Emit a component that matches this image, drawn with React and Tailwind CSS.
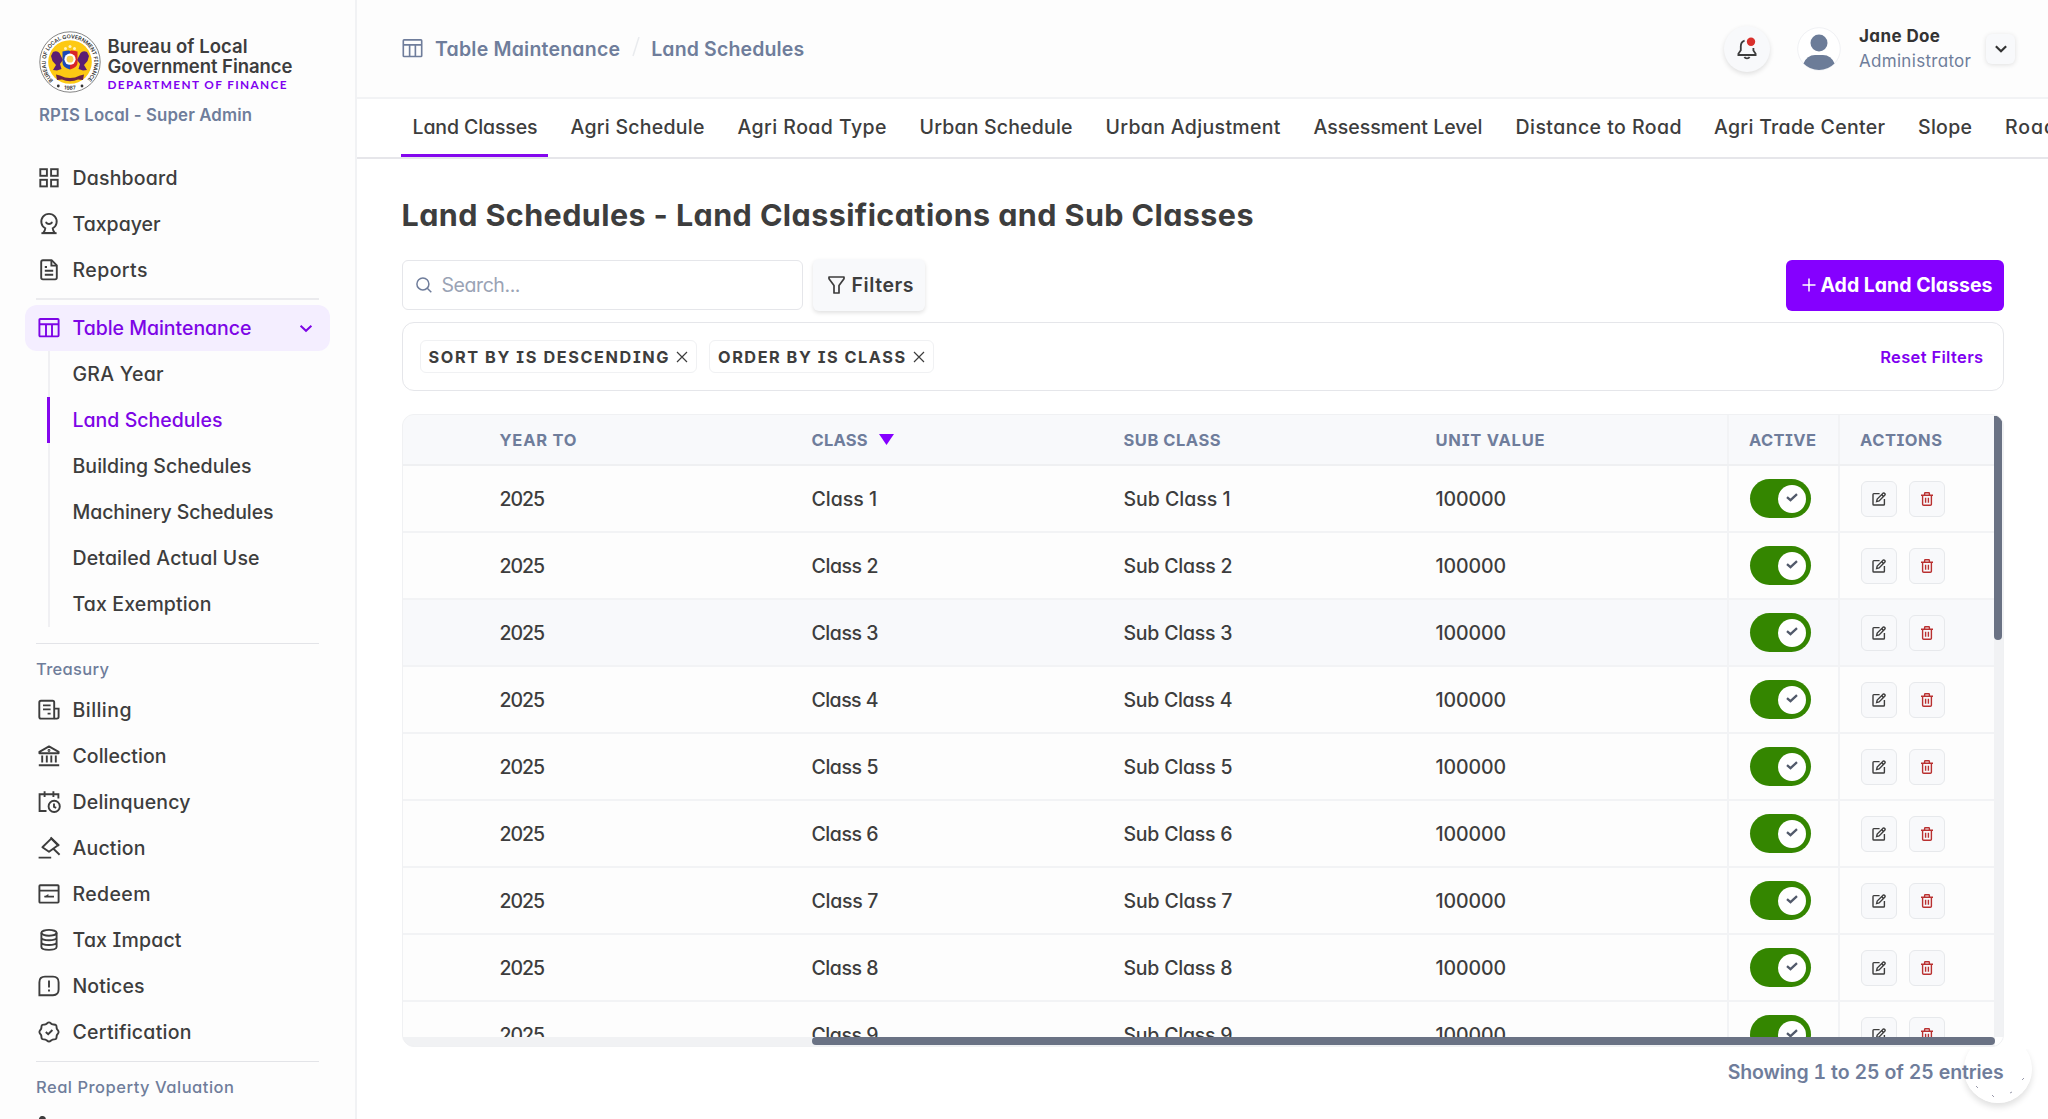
import { useLayoutEffect, useRef } from "react";

/* Text whose letters are spread evenly over a given width. */
function T({ w, className = "", children }) {
  const ref = useRef(null);
  useLayoutEffect(() => {
    const el = ref.current;
    el.style.letterSpacing = "0px";
    const n = el.textContent.length;
    const natural = el.getBoundingClientRect().width;
    el.style.letterSpacing = (w + 2 - natural) / Math.max(1, n - 1) + "px";
  }, [w, children]);
  return (
    <span className={"flex shrink-0 whitespace-nowrap -ml-px " + className}>
      <span ref={ref} className="pt-[2px]">{children}</span>
    </span>
  );
}

function Svg({ children, className = "size-6", sw = 1.9 }) {
  return (
    <svg
      viewBox="0 0 24 24"
      fill="none"
      stroke="currentColor"
      strokeWidth={sw}
      className={"shrink-0 " + className}
    >
      {children}
    </svg>
  );
}

const icons = {
  dashboard: (
    <>
      <rect x="3.3" y="3.2" width="6.6" height="6.6" />
      <rect x="14.1" y="3.2" width="6.6" height="6.6" />
      <rect x="3.3" y="13.8" width="6.6" height="6.6" />
      <rect x="14.1" y="13.8" width="6.6" height="6.6" />
    </>
  ),
  taxpayer: (
    <>
      <path d="M8.4 16.4A7.7 7.7 0 1 1 15.6 16.4M8.4 15.8Q8.2 18.600 6.2 21H17.800Q15.800 18.600 15.600 15.800" strokeLinejoin="round" />
      <path d="M4.400 21.200H19.600" />
      <path d="M9.2 10.6C10.4 12.4 13.6 12.4 14.8 10.6" strokeLinecap="round" />
    </>
  ),
  reports: (
    <>
      <path d="M4.2 3.9Q4.2 2.2 5.9 2.2H14.6L19.8 7.4V19.6Q19.8 21.4 18.1 21.4H5.9Q4.2 21.4 4.2 19.6Z" strokeLinejoin="round" />
      <path d="M14.4 2.4V7.6H19.6M7.8 9H10M7.8 12.8H16.2M7.8 16.8H16.2" />
    </>
  ),
  table: (
    <>
      <rect x="2.4" y="3" width="19.2" height="17.4" rx="0.8" />
      <path d="M2.4 8.2H21.6M9 8.2V20.4M15 8.2V20.4" />
    </>
  ),
  billing: (
    <>
      <path d="M17.2 20.6H4Q2.3 20.6 2.3 19V4.4Q2.3 2.8 4 2.8H15.6Q17.2 2.8 17.2 4.4V20.6" />
      <path d="M17.2 10.6H21.6V18.8Q21.6 20.6 19.8 20.6H17M6 7.4H13.6M6 11.4H13.6M10.6 15.6H13.6" />
    </>
  ),
  collection: (
    <>
      <path d="M2.4 7.8L12 2.4L21.6 7.8V9.2H2.4Z" strokeLinejoin="round" />
      <path d="M5.2 11.6V18.6M9.8 11.6V18.6M14.3 11.6V18.6M18.8 11.6V18.6M1.8 21.2H22.2" />
      <circle cx="12" cy="6.5" r="0.5" />
    </>
  ),
  delinquency: (
    <>
      <path d="M9.500 21H2.6V4.2H21.4V8.6M7.6 1.2V7M16.4 1.2V7" />
      <circle cx="17.2" cy="16.4" r="5.6" />
      <path d="M17 13.4V16.8L19.2 17.8" />
    </>
  ),
  auction: (
    <>
      <path d="M14.200 2.600L21 9.200L12 15.800L5.400 11.200Z" strokeLinejoin="round" />
      <path d="M13.6 1.400L22.200 9.800M16.4 12.800L22.600 18.800M1.6 21.600H14.2" />
    </>
  ),
  redeem: (
    <>
      <rect x="2.4" y="3.2" width="19.2" height="17.4" rx="0.8" />
      <path d="M2.4 8.6H21.6M7.400 14.600H17" />
      <path d="M7 15L11.400 12V15Z" fill="currentColor" stroke="none" />
    </>
  ),
  impact: (
    <>
      <ellipse cx="12" cy="4.8" rx="7.6" ry="2.9" />
      <path d="M4.4 4.8V19C4.4 22.8 19.6 22.8 19.6 19V4.8M4.4 9.6C4.4 13.2 19.6 13.2 19.6 9.6M4.4 14.3C4.4 17.9 19.6 17.9 19.6 14.3" />
    </>
  ),
  notices: (
    <>
      <path d="M2.4 8.2Q2.4 2.6 8 2.6H16Q21.6 2.6 21.6 8.2V15.6Q21.6 21.2 16 21.2H2.4Z" />
      <path d="M12 6.6V13.6M12 15.4V17.4" />
    </>
  ),
  certification: (
    <>
      <path d="M12 2.4C13.6 2.4 14.2 4.2 15.6 4.4C17 4.6 18.2 4.4 19 5.2C19.8 6 19.4 7.4 19.8 8.6C20.2 9.8 21.6 10.4 21.6 12C21.6 13.6 20.2 14.2 19.8 15.4C19.4 16.6 19.8 18 19 18.8C18.2 19.6 17 19.2 15.6 19.6C14.2 20 13.6 21.6 12 21.6C10.4 21.6 9.8 20 8.4 19.6C7 19.2 5.8 19.6 5 18.8C4.2 18 4.6 16.6 4.2 15.4C3.8 14.2 2.4 13.6 2.4 12C2.4 10.4 3.8 9.8 4.2 8.6C4.6 7.4 4.2 6 5 5.2C5.8 4.4 7 4.8 8.4 4.4C9.8 4 10.4 2.4 12 2.4Z" />
      <path d="M8.8 12L11.2 14.2L15.4 10" />
    </>
  ),
};

function Seal() {
  return (
    <svg viewBox="0 0 62 62" className="size-[62px] shrink-0">
      <defs>
        <path id="ring" d="M14.200 49.300A24.300 24.300 0 1 1 47.800 49.300" />
        <path id="base" d="M19 56.600Q31 61.000 43 56.600" />
      </defs>
      <circle cx="31" cy="31" r="30.2" fill="#fff" stroke="#666" strokeWidth="0.8" />
      <circle cx="31" cy="31" r="21.8" fill="#fdc913" />
      <text fontSize="5.4" fill="#333" fontFamily="Inter" fontWeight="600">
        <textPath href="#ring" textLength="114" lengthAdjust="spacing">
          BUREAU OF LOCAL GOVERNMENT FINANCE
        </textPath>
      </text>
      <text fontSize="5.4" fill="#333" fontFamily="Inter" fontWeight="600">
        <textPath href="#base" startOffset="50%" textAnchor="middle">
          1987
        </textPath>
      </text>
      <circle cx="19.3" cy="55" r="1.4" fill="#333" />
      <circle cx="43" cy="55" r="1.4" fill="#333" />
      <circle cx="31" cy="15.6" r="1.5" fill="#fff3c0" />
      <circle cx="26.5" cy="17.4" r="1.5" fill="#fff3c0" />
      <circle cx="35.5" cy="17.4" r="1.5" fill="#fff3c0" />
      <path d="M14 21Q18 19 20.5 22L24 29L21 33L22.5 38L18 39.5L14 39L17 34L13.5 30L12 25Z" fill="#5b1d73" />
      <path d="M48 21Q44 19 41.5 22L38 29L41 33L39.5 38L44 39.5L48 39L45 34L48.500 30L50 25Z" fill="#5b1d73" />
      <path d="M23.500 20.500Q31 19 31 20V38.500Q23.500 36 23.500 32Z" fill="#1c48b5" />
      <path d="M38.500 20.500Q31 19 31 20V38.500Q38.500 36 38.500 32Z" fill="#d8232a" />
      <circle cx="31" cy="28.200" r="5.600" fill="#fff" />
      <circle cx="31" cy="28.200" r="3.400" fill="#f8d254" />
      <path d="M17 43.500L21 44.500Q31 49.500 41 44.500L45 43.500L44 49L39 48.500Q31 52 23 48.500L18 49Z" fill="#6b2348" />
    </svg>
  );
}

function NavItem({ icon, label, w }) {
  return (
    <div className="flex h-[46px] shrink-0 items-center pl-[37px] text-[#3d3d3d]">
      <Svg>{icons[icon]}</Svg>
      <T w={w} className="ml-[11.500px]">{label}</T>
    </div>
  );
}

const treasury = [
  ["billing", "Billing", 57],
  ["collection", "Collection", 92],
  ["delinquency", "Delinquency", 116],
  ["auction", "Auction", 71],
  ["redeem", "Redeem", 76],
  ["impact", "Tax Impact", 107],
  ["notices", "Notices", 70],
  ["certification", "Certification", 117],
];
const subItems = [
  ["GRA Year", 89],
  ["Land Schedules", 148],
  ["Building Schedules", 177],
  ["Machinery Schedules", 199],
  ["Detailed Actual Use", 185],
  ["Tax Exemption", 137],
];

function Sidebar() {
  return (
    <aside className="flex w-[357px] shrink-0 flex-col overflow-hidden border-r-2 border-[#f1f2f4] bg-[#fdfdfd] text-[19.5px] font-medium">
      <div className="h-[155px] shrink-0 pl-[39px] pt-[31px]">
        <div className="flex h-[62px]">
          <Seal />
          <div className="ml-[7.500px] pt-[5px] font-semibold text-[#3d3d3d] [font-feature-settings:normal]">
            <T w={138} className="h-[19.600px] items-center text-[18.500px]">Bureau of Local</T>
            <T w={183} className="h-[19.600px] items-center text-[18.500px]">Government Finance</T>
            <T w={177} className="mt-[1px] h-4 items-center font-['Lato'] text-[11.800px] font-bold text-[#8000f0]">
              DEPARTMENT OF FINANCE
            </T>
          </div>
        </div>
        <T w={211} className="ml-0 mt-[10px] h-6 items-center text-[16.800px] font-semibold text-[#6f7d9b]">
          RPIS Local - Super Admin
        </T>
      </div>
      <NavItem icon="dashboard" label="Dashboard" w={103} />
      <NavItem icon="taxpayer" label="Taxpayer" w={86} />
      <NavItem icon="reports" label="Reports" w={73} />
      <div className="ml-9 mt-[5px] h-[2px] w-[283px] shrink-0 bg-[#ebebee]" />
      <div className="ml-[25px] mt-[5px] flex h-[46px] w-[305px] shrink-0 items-center rounded-xl bg-[#f4eeff] pl-3 text-[#7d05e6]">
        <Svg>{icons.table}</Svg>
        <T w={177} className="ml-[11.500px]">Table Maintenance</T>
        <Svg className="ml-auto mr-[12px] size-6" sw={2}>
          <path d="M6.600 9.800L12 14.800L17.400 9.800" />
        </Svg>
      </div>
      <div className="flex shrink-0 flex-col">
        {subItems.map(([label, w]) =>
          label === "Land Schedules" ? (
            <div key={label} className="ml-[47px] flex h-[46px] items-center border-l-[3px] border-[#8407ee] pl-[23.500px] text-[#7d05e6]">
              <T w={w}>{label}</T>
            </div>
          ) : (
            <div key={label} className="ml-[48px] flex h-[46px] items-center border-l-2 border-[#f0f0f3] pl-[23.500px] text-[#3d3d3d]">
              <T w={w}>{label}</T>
            </div>
          )
        )}
      </div>
      <div className="ml-9 mt-4 h-px w-[283px] shrink-0 bg-[#e3e4e8]" />
      <T w={71} className="ml-[36px] mt-[12px] h-6 items-center text-[16.500px] text-[#6f7d9b]">Treasury</T>
      <div className="mt-[7px] flex shrink-0 flex-col">
        {treasury.map(([i, l, w]) => (
          <NavItem key={l} icon={i} label={l} w={w} />
        ))}
      </div>
      <div className="ml-9 mt-[6px] h-px w-[283px] shrink-0 bg-[#e3e4e8]" />
      <T w={196} className="ml-[36px] mt-[12px] h-6 items-center text-[16.500px] text-[#6f7d9b]">
        Real Property Valuation
      </T>
      <div className="ml-[37px] mt-[18px] size-6 shrink-0 text-[#3d3d3d]">
        <Svg>
          <circle cx="5.400" cy="3.500" r="2.600" fill="currentColor" />
        </Svg>
      </div>
    </aside>
  );
}

function Header() {
  return (
    <header className="flex h-[99px] shrink-0 items-center border-b-2 border-[#f2f3f5] bg-[#fdfdfd] pl-[44px] pr-[33px] text-[#6f7d9b]">
      <Svg className="size-[23px]" sw={1.7}>{icons.table}</Svg>
      <T w={183} className="ml-[11px] text-[19.500px] font-semibold">Table Maintenance</T>
      <svg viewBox="0 0 10 24" className="ml-[11px] h-6 w-[10px]" stroke="#e9ebee" strokeWidth="1.500">
        <path d="M2 19L8 0" />
      </svg>
      <T w={151} className="ml-[10px] text-[19.500px] font-semibold">Land Schedules</T>
      <div className="ml-auto flex size-[46px] items-center justify-center rounded-full bg-[#f8f9fb] text-[#3d3d3d] shadow-[0_2px_5px_rgba(0,0,0,0.12)]">
        <Svg sw={1.8}>
          <path d="M9.600 3.600C6.600 4.400 5.800 6.400 5.800 9.600V13.200L3.400 16.800V18H20.600V16.800L18.400 13.400V11" />
          <path d="M9.400 20C10.400 21.800 13.600 21.800 14.600 20" />
          <circle cx="16" cy="4.700" r="4.200" fill="#d9302c" stroke="none" />
        </Svg>
      </div>
      <svg viewBox="0 0 44 44" className="ml-[27.500px] size-[44px]">
        <circle cx="22" cy="22" r="21.300" fill="#fff" stroke="#f0f1f4" />
        <circle cx="22" cy="16" r="8.500" fill="#6c7c98" />
        <path d="M6.500 36.500Q10 28 18 28H26Q34 28 37.500 36.500Q31 43 22 43Q13 43 6.500 36.500Z" fill="#6c7c98" />
      </svg>
      <div className="ml-[19px] flex w-[126px] flex-col text-[17px]">
        <T w={79} className="h-[25px] items-center font-bold text-[#333]">Jane Doe</T>
        <T w={110} className="h-[25px] items-center font-normal">Administrator</T>
      </div>
      <div className="flex h-[30px] w-[29px] items-center justify-center rounded-md bg-[#f8f9fb] text-[#333] shadow-[0_1px_5px_rgba(0,0,0,0.12)]">
        <Svg className="size-[22px]" sw={2.400}>
          <path d="M6.400 9L12 14.400L17.600 9" />
        </Svg>
      </div>
    </header>
  );
}

const tabs = [
  ["Land Classes", 123, 158],
  ["Agri Schedule", 132, 167],
  ["Agri Road Type", 147, 182],
  ["Urban Schedule", 151, 186],
  ["Urban Adjustment", 173, 208],
  ["Assessment Level", 167, 202],
  ["Distance to Road", 164, 198.500],
  ["Agri Trade Center", 169, 204],
  ["Slope", 52, 87],
  ["Road", 49, 60],
];

function Tabs() {
  return (
    <nav className="flex h-[60px] shrink-0 overflow-hidden border-b-2 border-[#e6e6ea] bg-white pl-[44px] text-[19.500px] font-medium text-[#3d3d3d]">
      {tabs.map(([l, w, box], i) => (
        <div key={l} className="shrink-0" style={{ width: box }}>
          <div
            className={
              i === 0
                ? "flex h-[58px] w-[147px] items-center border-b-[3px] border-[#8407ee] pl-[12.500px] pt-[1px]"
                : "flex h-[55px] items-center pl-[12.500px] pt-[1px]"
            }
          >
            <T w={w}>{l}</T>
          </div>
        </div>
      ))}
    </nav>
  );
}

function Chip({ w, children }) {
  return (
    <div className="flex h-[33px] items-center rounded-md border-[1.500px] border-[#f0f1f3] pl-[9px] pr-[8px]">
      <T w={w} className="text-[16.300px] font-bold">{children}</T>
      <svg viewBox="0 0 12 12" className="ml-[6px] size-3" stroke="currentColor" strokeWidth="1.200">
        <path d="M1 1L11 11M11 1L1 11" />
      </svg>
    </div>
  );
}

function Cells({ a, b, c, d, e, f, className }) {
  return (
    <div className={"grid shrink-0 grid-cols-[410px_312px_312px_290px_111px_156px] " + className}>
      <div className="flex items-center pl-[98px]">{a}</div>
      <div className="flex items-center">{b}</div>
      <div className="flex items-center">{c}</div>
      <div className="flex items-center">{d}</div>
      <div className="flex items-center border-l-2 border-[#f2f3f5] pl-[21.500px]">{e}</div>
      <div className="flex items-center gap-3 border-l-2 border-[#f2f3f5] pl-[21.500px]">{f}</div>
    </div>
  );
}

function ActionButton({ children, className }) {
  return (
    <div className={"flex size-9 items-center justify-center rounded-md border-[1.500px] border-[#e7e9ec] bg-[#f8f9fb] " + className}>
      {children}
    </div>
  );
}

function Row({ n }) {
  return (
    <Cells
      className={
        "h-[67px] border-b-2 border-[#f2f3f5] text-[19.500px] font-medium text-[#3d3d3d] " +
        (n === 3 ? "bg-[#f8f9fb]" : "bg-[#fdfdfd]")
      }
      a={<T w={43.500}>2025</T>}
      b={<T w={n === 1 ? 63.500 : 65}>{"Class " + n}</T>}
      c={<T w={n === 1 ? 105 : 107}>{"Sub Class " + n}</T>}
      d={<T w={68.500}>100000</T>}
      e={
        <div className="flex h-[39px] w-[61px] items-center justify-end rounded-full bg-[#348600] pr-[5px]">
          <div className="flex size-7 items-center justify-center rounded-full bg-white">
            <svg viewBox="0 0 12 9" className="-mt-[3px] h-[9px] w-3" fill="none" stroke="#525a6b" strokeWidth="2.300">
              <path d="M1 4.200L4.500 7.200L11 1.200" />
            </svg>
          </div>
        </div>
      }
      f={
        <>
          <ActionButton className="text-[#3d3d3d]">
            <svg viewBox="0 0 14 14" className="size-[14px]" fill="none" stroke="currentColor" strokeWidth="1.400">
              <path d="M7.600 1.600H1.800Q1 1.600 1 2.400V12.200Q1 13 1.800 13H11.600Q12.400 13 12.400 12.200V7" />
              <path d="M4.600 9.600L5.200 7L11 1.200Q12 0.600 12.800 1.400Q13.500 2.200 12.900 3.100L7.100 8.900Z" />
              <path d="M9.600 2.600L11.500 4.500" />
            </svg>
          </ActionButton>
          <ActionButton className="text-[#b93030]">
            <svg viewBox="0 0 12 14" className="h-[14px] w-3" fill="none" stroke="currentColor" strokeWidth="1.400">
              <path d="M0 3.200H12M3.600 3V1.500Q3.600 0.800 4.300 0.800H7.700Q8.400 0.800 8.400 1.500V3M1.600 3.200V12.200Q1.600 13.300 2.700 13.300H9.300Q10.400 13.300 10.400 12.200V3.200M4.600 5.800V10.800M7.400 5.800V10.800" />
            </svg>
          </ActionButton>
        </>
      }
    />
  );
}

function Table() {
  return (
    <div className="mt-[23px] flex h-[633px] w-[1602px] shrink-0 flex-col overflow-hidden rounded-xl border-[1.500px] border-[#f0f1f3] bg-[#f1f2f4]">
      <div className="flex min-h-0 flex-1">
        <div className="flex w-[1591px] shrink-0 flex-col overflow-hidden">
          <Cells
            className="h-[51px] border-b-2 border-[#eff0f2] bg-[#f8f9fb] text-[16.500px] font-bold text-[#6f7d9b]"
            a={<T w={75}>YEAR TO</T>}
            b={
              <>
                <T w={54}>CLASS</T>
                <svg viewBox="0 0 15 11" className="ml-[11px] h-[11px] w-[15px]" fill="#8500ff">
                  <path d="M0 0H15L7.500 11Z" />
                </svg>
              </>
            }
            c={<T w={95}>SUB CLASS</T>}
            d={<T w={107}>UNIT VALUE</T>}
            e={<T w={65}>ACTIVE</T>}
            f={<T w={80}>ACTIONS</T>}
          />
          {[1, 2, 3, 4, 5, 6, 7, 8, 9].map((n) => (
            <Row key={n} n={n} />
          ))}
        </div>
        <div className="flex-1 pt-px">
          <div className="h-[224px] w-2 rounded-b-full rounded-tl-sm rounded-tr-lg bg-[#6a7284]" />
        </div>
      </div>
      <div className="flex h-[9px] shrink-0">
        <div className="ml-[409px] h-2 w-[1183px] rounded-full bg-[#6a7284]" />
        <div className="h-full flex-1 bg-white" />
      </div>
    </div>
  );
}

export default function App() {
  return (
    <div className="relative flex h-[1119px] w-[2048px] overflow-hidden bg-white font-['Inter',sans-serif] [font-feature-settings:'cv11','cv08']">
      <Sidebar />
      <div className="flex min-w-0 flex-1 flex-col">
        <Header />
        <Tabs />
        <main className="flex flex-col pl-[44.500px] text-[#3d3d3d]">
          <T w={850} className="ml-0 mt-[35px] h-10 items-center text-[30.500px] font-bold">
            Land Schedules - Land Classifications and Sub Classes
          </T>
          <div className="mt-[25px] flex h-[52px] w-[1602px] items-center">
            <div className="flex h-[50px] w-[401px] items-center rounded-md border-[1.500px] border-[#e5e6ea] pl-[13px] text-[#9aa3b5]">
              <svg viewBox="0 0 16 16" className="size-4" fill="none" stroke="#6f7d9b" strokeWidth="1.500">
                <circle cx="6.900" cy="6.900" r="6" />
                <path d="M11.300 11.300L15.300 15.300" />
              </svg>
              <T w={77} className="ml-[10px] text-[19.500px]">Search...</T>
            </div>
            <div className="ml-[10px] flex h-[52px] w-[112px] items-center rounded-md bg-[#f8f9fb] pl-[15px] shadow-[0_2px_4px_rgba(0,0,0,0.12)]">
              <svg viewBox="0 0 17 18" className="h-[18px] w-[17px]" fill="none" stroke="currentColor" strokeWidth="1.700" strokeLinejoin="round">
                <path d="M1 1H16V2.800L11 9.500V17H6V9.500L1 2.800Z" />
              </svg>
              <T w={60} className="ml-[7px] text-[19.500px] font-semibold">Filters</T>
            </div>
            <div className="ml-auto flex h-[51px] w-[218px] items-center rounded-md bg-[#8500ff] pl-[16px] text-white">
              <svg viewBox="0 0 14 14" className="size-[14px]" stroke="currentColor" strokeWidth="1.500">
                <path d="M7 0.500V13.500M0.500 7H13.500" />
              </svg>
              <T w={170} className="ml-[5px] text-[19.500px] font-bold">Add Land Classes</T>
            </div>
          </div>
          <div className="mt-[11px] flex h-[69px] w-[1602px] items-center gap-3 rounded-xl border-[1.500px] border-[#e5e6ea] pl-[17px] pr-[19px]">
            <Chip w={238}>SORT BY IS DESCENDING</Chip>
            <Chip w={185}>ORDER BY IS CLASS</Chip>
            <T w={101} className="ml-auto! text-[16.500px] font-semibold text-[#8000f0]">Reset Filters</T>
          </div>
          <Table />
          <div className="z-10 flex h-[50px] w-[1602px] items-center justify-end text-[#6f7d9b] [font-feature-settings:'cv11','cv08','tnum']">
            <T w={274} className="text-[19.500px] font-semibold">Showing 1 to 25 of 25 entries</T>
          </div>
        </main>
      </div>
      <svg
        viewBox="0 0 68 68"
        className="absolute left-[1964px] top-[1035px] size-[68px] rounded-full shadow-[0_4px_6px_rgba(0,0,0,0.12)] [clip-path:inset(14px_-20px_-20px_-20px)]"
      >
        <circle cx="34" cy="34" r="34" fill="#fff" />
        <path d="M12 51L14 53M28 60L30 62M46 58L48 57M58 45L60 43" stroke="#99a" strokeWidth="1" />
      </svg>
    </div>
  );
}
